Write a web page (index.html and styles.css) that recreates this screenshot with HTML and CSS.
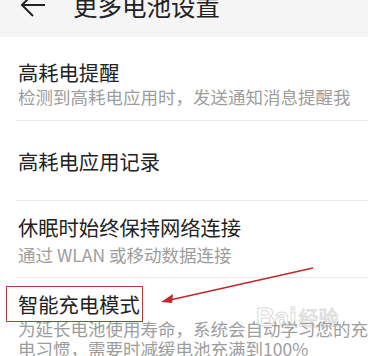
FILE: index.html
```html
<!DOCTYPE html>
<html lang="zh">
<head>
<meta charset="utf-8">
<link rel="stylesheet" href="styles.css">
</head>
<body>
<div class="page">
  <header class="header">
    <svg class="back" width="26" height="26" viewBox="0 0 26 26">
      <path d="M25 13H2M13 2L2 13l11 11" fill="none" stroke="#222" stroke-width="2"/>
    </svg>
    <div class="header-title">更多电池设置</div>
  </header>
  <div class="list">
    <div class="item item-first">
      <div class="title">高耗电提醒</div>
      <div class="sub">检测到高耗电应用时，发送通知消息提醒我</div>
    </div>
    <div class="item item-single">
      <div class="title">高耗电应用记录</div>
    </div>
    <div class="item item-third">
      <div class="title">休眠时始终保持网络连接</div>
      <div class="sub sub-third">通过 WLAN 或移动数据连接</div>
    </div>
    <div class="item item-last">
      <div class="title">智能充电模式</div>
      <div class="sub sub-multi">为延长电池使用寿命，系统会自动学习您的充电习惯，需要时减缓电池充满到100%</div>
    </div>
  </div>
  <div class="highlight"></div>
  <svg class="annot" width="368" height="356" viewBox="0 0 368 356">
    <line x1="313" y1="268" x2="170" y2="300" stroke="#c0282c" stroke-width="1.4"/>
    <path d="M161 302L173 294L172 303Z" fill="#c0282c"/>
  </svg>
  <div class="watermark"><span class="wm-bai">Bai</span><span class="wm-jy">经验</span></div>
</div>
</body>
</html>
```

FILE: styles.css
```css
html, body {
  margin: 0;
  padding: 0;
  background: #ffffff;
}
body {
  width: 368px;
  height: 356px;
  overflow: hidden;
  font-family: "Noto Sans CJK SC", "Noto Sans", sans-serif;
}
.page {
  position: relative;
  width: 368px;
  height: 356px;
  overflow: hidden;
}
.header {
  height: 37px;
  background: #f5f5f5;
  display: flex;
  align-items: flex-start;
  padding-left: 20px;
  box-sizing: border-box;
}
.back {
  margin-top: -8px;
  flex: none;
}
.header-title {
  margin-left: 27px;
  margin-top: -10px;
  font-size: 24.5px;
  line-height: 32px;
  color: #222;
  letter-spacing: 0;
}
.list {
  display: flex;
  flex-direction: column;
}
.item {
  margin-left: 16px;
  padding-left: 2px;
  border-bottom: 1px solid #e9e9e9;
}
.title {
  font-size: 20.3px;
  line-height: 26px;
  color: #222;
}
.sub {
  font-size: 17.5px;
  line-height: 24px;
  color: #9d9d9d;
}
.item-first {
  padding-top: 22px;
  padding-bottom: 11px;
}
.item-single {
  padding-top: 27px;
  padding-bottom: 26px;
}
.item-third {
  padding-top: 12.5px;
  padding-bottom: 10px;
}
.sub-third {
  margin-top: 3.5px;
}
.item-last {
  padding-top: 13px;
  border-bottom: none;
}
.sub-multi {
  line-height: 19.5px;
  margin-top: 2px;
  white-space: normal;
  margin-right: -10px;
}
.highlight {
  position: absolute;
  left: 6px;
  top: 286px;
  width: 137px;
  height: 36px;
  border: 1.5px solid #b43a3c;
  box-sizing: border-box;
}
.annot {
  position: absolute;
  left: 0;
  top: 0;
}
.watermark {
  position: absolute;
  left: 256px;
  top: 302px;
  display: flex;
  align-items: flex-end;
  gap: 2px;
  opacity: 0.35;
  color: #ffffff;
  -webkit-text-stroke: 1px #999;
}
.wm-bai {
  font-family: "Liberation Sans", sans-serif;
  font-size: 26px;
  font-weight: bold;
  line-height: 30px;
}
.wm-jy {
  font-size: 20px;
  line-height: 28px;
}
```
